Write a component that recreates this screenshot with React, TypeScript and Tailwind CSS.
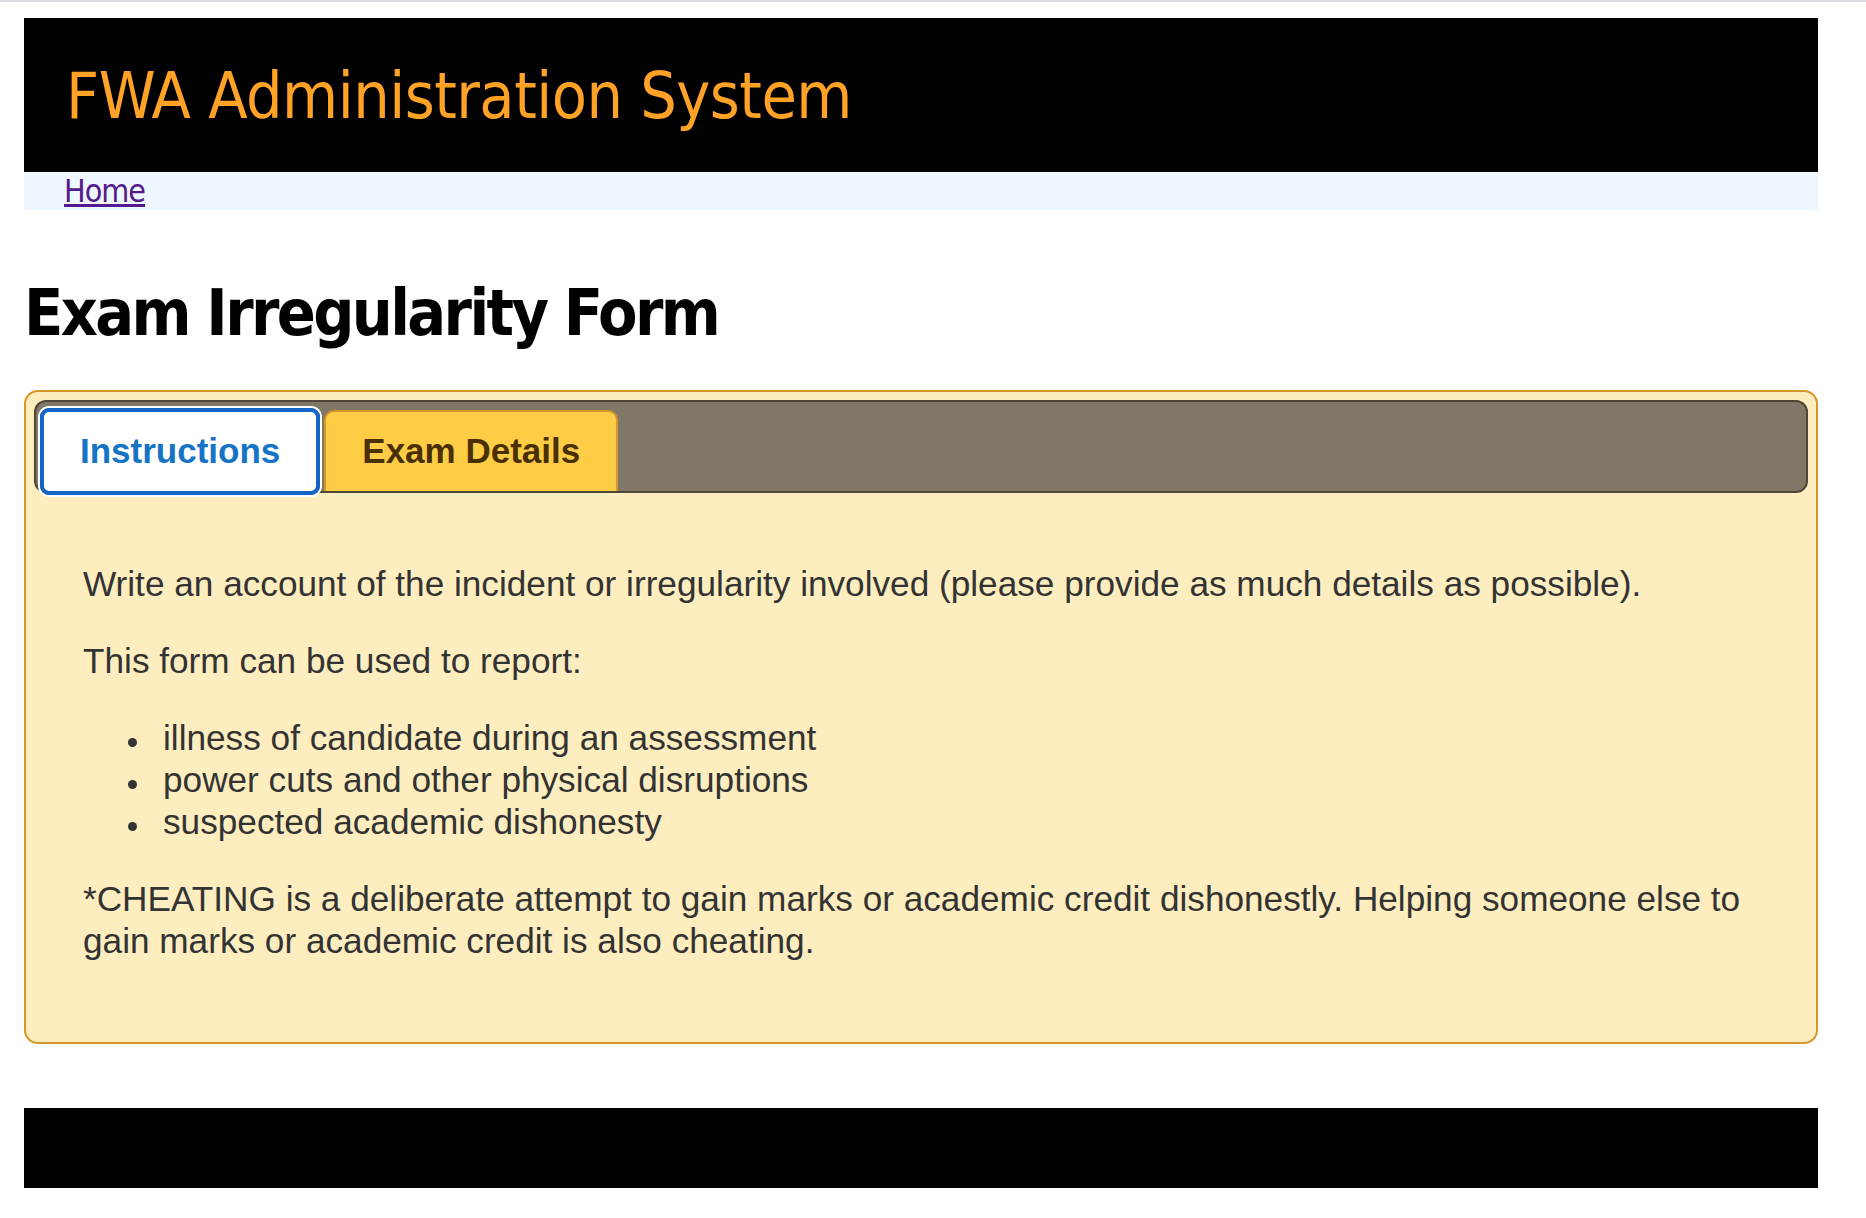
import React from "react";

const tahoma = '"DejaVu Sans Condensed", "DejaVu Sans", sans-serif';
const arial = '"Liberation Sans", Arial, Helvetica, sans-serif';

const items = [
  "illness of candidate during an assessment",
  "power cuts and other physical disruptions",
  "suspected academic dishonesty",
];

export default function App() {
  return (
    <div className="min-h-screen bg-white">
      <div className="h-[2px] bg-[#dcdce3]" />
      <div className="ml-[24px] w-[1794px]">
        <header className="mt-[16px] h-[154px] bg-black pl-[42px] pt-[46px]">
          <div
            className="text-[64px] leading-none tracking-[-0.5px] text-[#ffa226]"
            style={{ fontFamily: tahoma }}
          >
            FWA Administration System
          </div>
        </header>
        <nav className="h-[38px] bg-[#eef7fe] pl-[40px] pt-[3px]">
          <a
            href="#"
            className="text-[32px] leading-none tracking-[-1px] text-[#551a8b] underline"
            style={{ fontFamily: tahoma }}
          >
            Home
          </a>
        </nav>
        <h1
          className="mt-[71px] mb-[45px] text-[64px] font-bold leading-none tracking-[-2.6px] text-black"
          style={{ fontFamily: tahoma }}
        >
          Exam Irregularity Form
        </h1>

        <div className="rounded-[14px] border-2 border-[#d6962a] bg-[#feeebf] px-[8px] pt-[8px] pb-[10px]">
          <div className="flex h-[93px] items-end gap-[4px] rounded-[12px] border-2 border-[#4e4737] bg-[#807866] pl-[4px]">
            <div className="mb-[-4px] rounded-[9px] bg-[#5e5849] shadow-[0_0_0_2px_#ffffff]">
              <div
                className="rounded-[9px] border-4 border-[#1565c8] bg-white px-[36px] pt-[21px] pb-[23px] text-[35px] font-bold leading-none text-[#1574c4]"
                style={{ fontFamily: arial }}
              >
                Instructions
              </div>
            </div>
            <div
              className="rounded-t-[10px] border-2 border-b-0 border-[#d6962a] bg-[#fecd45] px-[36px] pt-[21px] pb-[23px] text-[35px] font-bold leading-none text-[#4a3000]"
              style={{ fontFamily: arial }}
            >
              Exam Details
            </div>
          </div>

          <div
            className="px-[49px] py-[35px] text-[35.2px] leading-[42px] text-[#333333]"
            style={{ fontFamily: arial }}
          >
            <p className="my-[35px]">
              Write an account of the incident or irregularity involved (please provide as much details as possible).
            </p>
            <p className="my-[35px]">This form can be used to report:</p>
            <ul className="my-[35px] list-none pl-[80px]">
              {items.map((t) => (
                <li key={t} className="ml-[-36px] flex items-start">
                  <span className="mt-[21px] mr-[26px] ml-[1px] h-[9px] w-[9px] shrink-0 rounded-full bg-[#333333]" />
                  <span>{t}</span>
                </li>
              ))}
            </ul>
            <p className="my-[35px]">
              *CHEATING is a deliberate attempt to gain marks or academic credit dishonestly. Helping someone else to gain marks or academic credit is also cheating.
            </p>
          </div>
        </div>

        <footer className="mt-[64px] h-[80px] bg-black" />
      </div>
    </div>
  );
}
